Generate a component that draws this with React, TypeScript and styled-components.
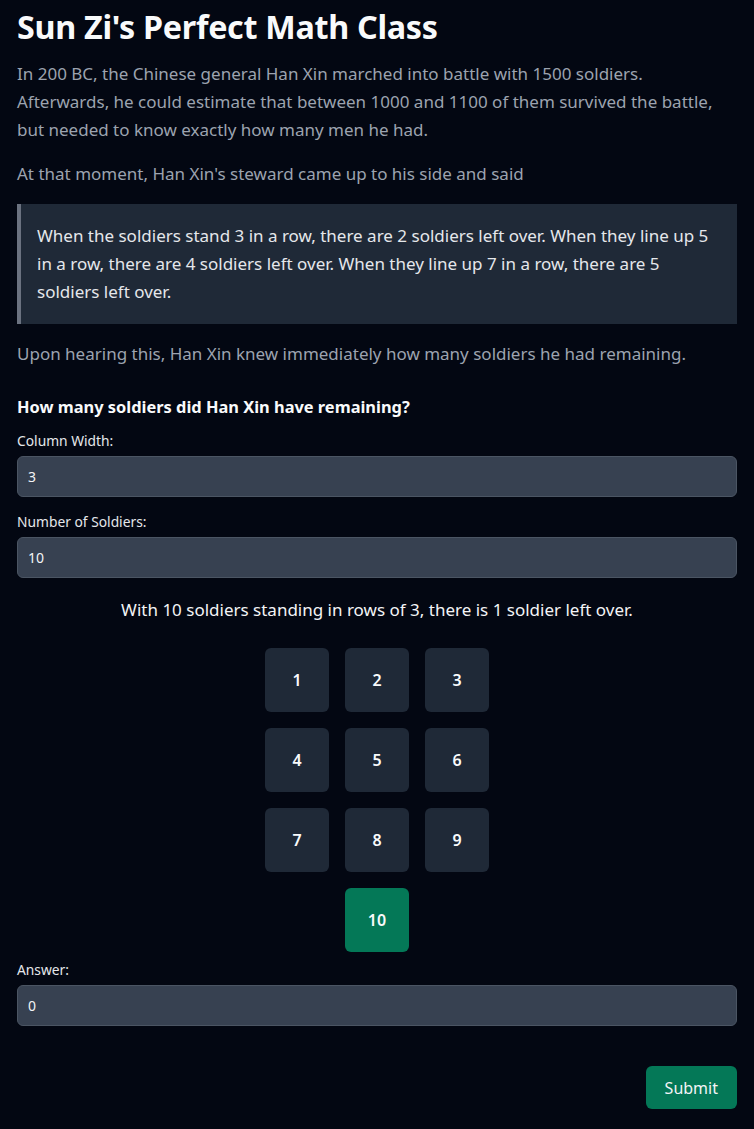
import React, { useState } from 'react';
import styled, { createGlobalStyle } from 'styled-components';

const GlobalStyle = createGlobalStyle`
    html, body {
        margin: 0;
        padding: 0;
        background: #030712;
    }
    body {
        font-family: 'Noto Sans', 'Open Sans', sans-serif;
        color: #f3f4f6;
    }
`;

const Page = styled.main`
    box-sizing: border-box;
    min-height: 1129px;
    padding: 6px 17px 20px;
    background: #030712;
`;

const Title = styled.h1`
    margin: 0 0 14px;
    font-size: 32.3px;
    font-weight: 700;
    line-height: 40px;
    letter-spacing: -0.3px;
    color: #f9fafb;
`;

const Para = styled.p`
    margin: 0 0 16px;
    font-size: 17px;
    line-height: 28px;
    color: #9ca3af;
`;

const Quote = styled.blockquote`
    margin: 0 0 16px;
    padding: 18px 16px 18px 16px;
    background: #1f2937;
    border-left: 4px solid #6b7280;
    font-size: 17px;
    line-height: 28px;
    color: #e5e7eb;
`;

const Question = styled.h2`
    margin: 27px 0 12px;
    font-size: 16.4px;
    font-weight: 700;
    line-height: 24px;
    color: #f9fafb;
`;

const Field = styled.div`
    display: flex;
    flex-direction: column;
    gap: 5px;
    margin-bottom: 15px;
`;

const Label = styled.label`
    font-size: 13.8px;
    line-height: 20px;
    color: #e5e7eb;
`;

const Input = styled.input`
    box-sizing: border-box;
    width: 100%;
    height: 41px;
    padding: 0 10px;
    background: #374151;
    border: 1px solid #4b5563;
    border-radius: 6px;
    font-family: inherit;
    font-size: 14px;
    color: #f3f4f6;
    outline: none;
`;

const Result = styled.p`
    margin: 20px 0 26px;
    text-align: center;
    font-size: 17px;
    line-height: 24px;
    color: #f3f4f6;
`;

const Grid = styled.div<{ cols: number }>`
    display: grid;
    grid-template-columns: repeat(${props => props.cols}, 64px);
    gap: 16px;
    justify-content: center;
    margin-bottom: 8px;
`;

const Tile = styled.div<{ active?: boolean }>`
    display: flex;
    align-items: center;
    justify-content: center;
    width: 64px;
    height: 64px;
    border-radius: 6px;
    background: ${props => (props.active ? '#047857' : '#1f2937')};
    font-size: 16px;
    font-weight: 600;
    color: #f9fafb;
`;

const Actions = styled.div`
    display: flex;
    justify-content: flex-end;
    margin-top: 40px;
`;

const SubmitButton = styled.button`
    height: 43px;
    padding: 0 19px;
    border: none;
    border-radius: 6px;
    background: #047857;
    font-family: inherit;
    font-size: 16px;
    color: #f3f4f6;
    cursor: pointer;
`;

const App = () => {
    const [width, setWidth] = useState('3');
    const [count, setCount] = useState('10');
    const [answer, setAnswer] = useState('0');

    const cols = Math.max(1, parseInt(width, 10) || 1);
    const total = Math.max(0, parseInt(count, 10) || 0);
    const left = total % cols;
    const tiles = Array.from({ length: total }, (_, i) => i + 1);
    const lastRowStart = total - left;

    return (
        <Page>
            <GlobalStyle />
            <Title>Sun Zi's Perfect Math Class</Title>
            <Para>
                In 200 BC, the Chinese general Han Xin marched into battle with 1500 soldiers. Afterwards, he could
                estimate that between 1000 and 1100 of them survived the battle, but needed to know exactly how many
                men he had.
            </Para>
            <Para>At that moment, Han Xin's steward came up to his side and said</Para>
            <Quote>
                When the soldiers stand 3 in a row, there are 2 soldiers left over. When they line up 5 in a row,
                there are 4 soldiers left over. When they line up 7 in a row, there are 5 soldiers left over.
            </Quote>
            <Para>Upon hearing this, Han Xin knew immediately how many soldiers he had remaining.</Para>

            <Question>How many soldiers did Han Xin have remaining?</Question>
            <Field>
                <Label>Column Width:</Label>
                <Input value={width} onChange={e => setWidth(e.target.value)} />
            </Field>
            <Field>
                <Label>Number of Soldiers:</Label>
                <Input value={count} onChange={e => setCount(e.target.value)} />
            </Field>

            <Result>
                With {total} soldiers standing in rows of {cols}, there is {left} soldier{left === 1 ? '' : 's'} left
                over.
            </Result>
            <Grid cols={cols}>
                {tiles.map(n => (
                    <Tile
                        key={n}
                        active={n > lastRowStart}
                        style={n === lastRowStart + 1 && left > 0 ? { gridColumn: Math.ceil(cols / 2) } : undefined}
                    >
                        {n}
                    </Tile>
                ))}
            </Grid>

            <Field>
                <Label>Answer:</Label>
                <Input value={answer} onChange={e => setAnswer(e.target.value)} />
            </Field>
            <Actions>
                <SubmitButton>Submit</SubmitButton>
            </Actions>
        </Page>
    );
};

export default App;
